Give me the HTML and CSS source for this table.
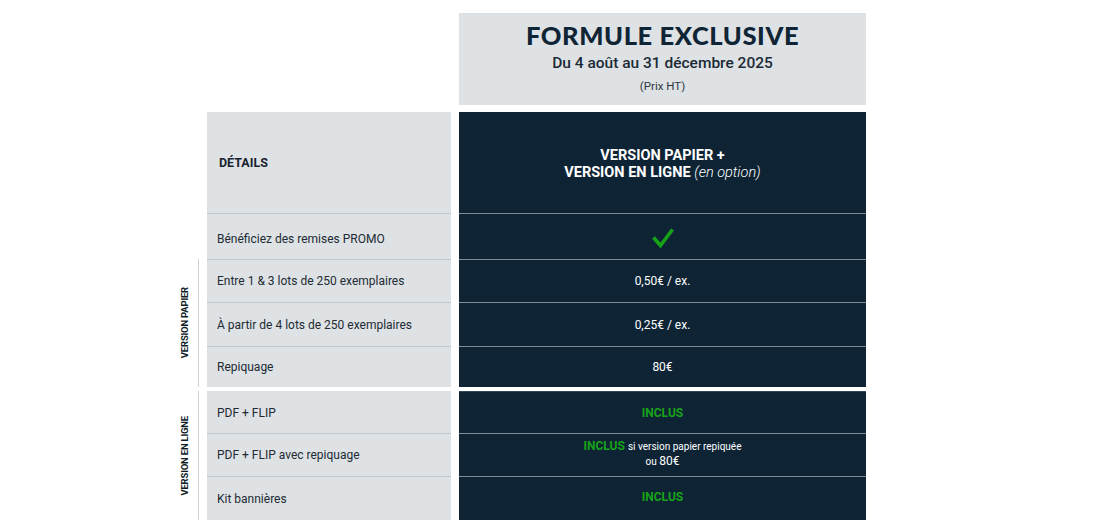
FILE: index.html
```html
<!DOCTYPE html>
<html lang="fr">
  <head>
    <meta charset="UTF-8" />
    <meta name="viewport" content="width=device-width, initial-scale=1.0" />
    <title>Formule exclusive</title>
    <link rel="stylesheet" href="styles.css">
  </head>

  <body>
    <div class="pricing">
      <!-- En-tete de la formule -->
      <div class="block block-top">
        <div></div>
        <div></div>
        <div class="offer">
          <div class="offer-title">FORMULE EXCLUSIVE</div>
          <div class="offer-dates">Du 4 août au 31 décembre 2025</div>
          <div class="offer-note">(Prix HT)</div>
        </div>
      </div>

      <div class="block block-head">
        <div></div>
        <div class="cell cell-label head">DÉTAILS</div>
        <div class="cell cell-value head">
          <div>
            VERSION PAPIER +<br />
            VERSION EN LIGNE <span class="option">(en option)</span>
          </div>
        </div>
        <div></div>
        <div class="cell cell-label promo">Bénéficiez des remises PROMO</div>
        <div class="cell cell-value">
          <svg class="check" width="22" height="20" viewBox="0 0 22 20">
            <path d="M1.5 9.5 L8.5 17.5 L20.5 1.5" fill="none" stroke="#17a317" stroke-width="3.6" />
          </svg>
        </div>
      </div>

      <!-- Version papier -->
      <div class="block block-paper">
        <div class="section"><span>VERSION PAPIER</span></div>
        <div class="cell cell-label">Entre 1 &amp; 3 lots de 250 exemplaires</div>
        <div class="cell cell-value">0,50€ / ex.</div>
        <div class="cell cell-label">À partir de 4 lots de 250 exemplaires</div>
        <div class="cell cell-value">0,25€ / ex.</div>
        <div class="cell cell-label">Repiquage</div>
        <div class="cell cell-value">80€</div>
      </div>

      <!-- Version en ligne -->
      <div class="block block-online">
        <div class="section"><span>VERSION EN LIGNE</span></div>
        <div class="cell cell-label first">PDF + FLIP</div>
        <div class="cell cell-value first"><span class="included">INCLUS</span></div>
        <div class="cell cell-label">PDF + FLIP avec repiquage</div>
        <div class="cell cell-value stacked">
          <div><span class="included">INCLUS</span> <span class="small">si version papier repiquée</span></div>
          <div class="small">ou <span class="price">80€</span></div>
        </div>
        <div class="cell cell-label">Kit bannières</div>
        <div class="cell cell-value last"><span class="included">INCLUS</span></div>
      </div>
    </div>
  </body>
</html>
```

FILE: styles.css
```css
body {
  font-family: Roboto, "Liberation Sans", sans-serif;
  margin: 0;
  padding: 13px 0 0 0;
  background-color: #fff;
  color: #1c2a36;
}

.pricing {
  margin-left: 173px;
  width: 693px;
}

.block {
  display: grid;
  grid-template-columns: 26px 244px 407px;
  column-gap: 8px;
}

.block-top {
  margin-bottom: 7px;
}

.block-head {
  grid-template-rows: 101px 46px;
}

.block-paper {
  grid-template-rows: 43px 44px 41px;
  margin-bottom: 4px;
}

.block-online {
  grid-template-rows: 42px 43px 44px;
}

/* carte du haut */
.offer {
  background-color: #dee2e5;
  height: 92px;
  text-align: center;
  box-sizing: border-box;
  padding-top: 8px;
}

.offer-title {
  font-family: Lato, "Open Sans", sans-serif;
  font-weight: 900;
  font-size: 25.5px;
  line-height: 28px;
  letter-spacing: 0.6px;
  color: #0f2535;
}

.offer-dates {
  font-size: 15.5px;
  font-weight: 500;
  line-height: 20px;
  margin-top: 4px;
  color: #1c2a36;
}

.offer-note {
  font-size: 11.5px;
  line-height: 14px;
  margin-top: 6px;
  color: #2b3640;
}

/* cellules */
.cell {
  display: flex;
  align-items: center;
  box-sizing: border-box;
  border-top: 1px solid transparent;
}

.cell-label {
  background-color: #dee2e5;
  border-top-color: #c3c8cc;
  padding-left: 10px;
  font-size: 12px;
  color: #222b33;
}

.cell-label.promo {
  padding-top: 4px;
}

.cell-value {
  background-color: #0e2435;
  border-top-color: #7e8c97;
  justify-content: center;
  text-align: center;
  font-size: 12px;
  color: #fff;
}

.cell.head {
  border-top: none;
  font-weight: 700;
}

.cell-label.head {
  padding-left: 12px;
  font-size: 12.5px;
  color: #17232e;
}

.cell-value.head {
  font-size: 14.5px;
  line-height: 17px;
  padding-top: 2px;
}

.option {
  font-style: italic;
  font-weight: 300;
}

.check {
  margin-top: 2px;
}

.cell.first {
  border-top-color: transparent;
}

.cell-value.first {
  border-top-color: #33485a;
}

.cell-value.last {
  padding-bottom: 4px;
}

.stacked {
  flex-direction: column;
  justify-content: flex-start;
  padding-top: 5px;
  line-height: 15px;
}

.included {
  color: #17a317;
  font-weight: 700;
  font-size: 12px;
}

.small {
  font-size: 10px;
}

.price {
  font-size: 12px;
}

/* libelles verticaux */
.section {
  grid-row: 1 / span 3;
  border-right: 1px solid #cfd3d6;
  display: flex;
  align-items: center;
  justify-content: center;
}

.section span {
  writing-mode: vertical-rl;
  transform: rotate(180deg);
  font-size: 9.5px;
  font-weight: 700;
  letter-spacing: -0.2px;
  color: #0f1c26;
  margin-right: 2px;
}
```
